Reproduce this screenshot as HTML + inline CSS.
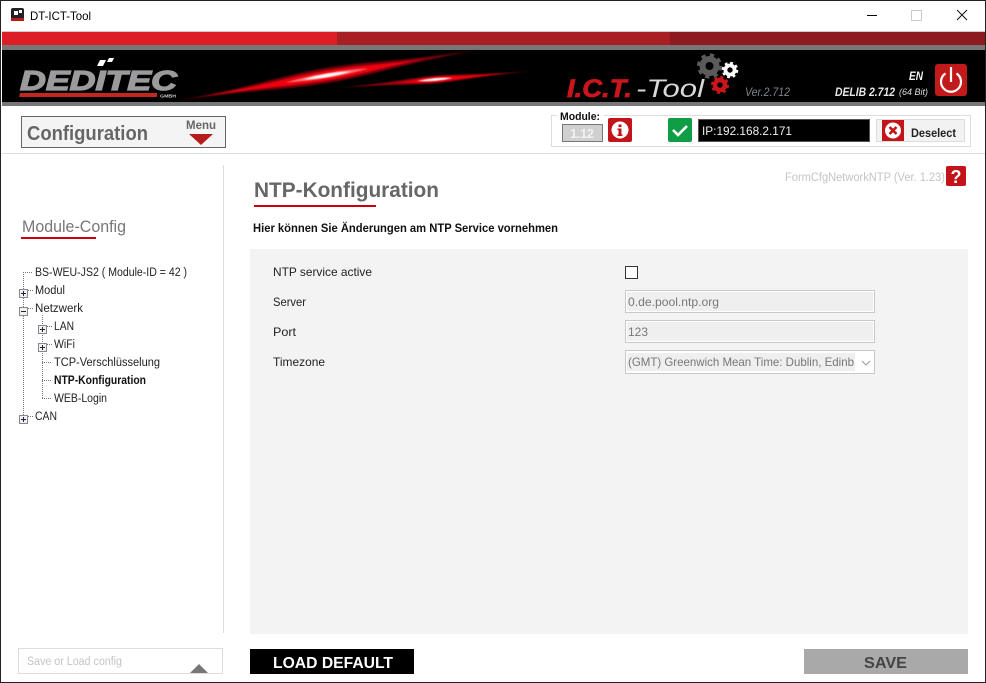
<!DOCTYPE html>
<html><head><meta charset="utf-8"><title>DT-ICT-Tool</title>
<style>
html,body{margin:0;padding:0;background:#fff;width:986px;height:683px;overflow:hidden}
svg{display:block}
text{font-family:"Liberation Sans",sans-serif;white-space:pre}
.t{font-size:11.5px;fill:#222}
.l{font-size:12px;fill:#222}
</style></head><body>
<svg width="986" height="683" viewBox="0 0 986 683" xmlns="http://www.w3.org/2000/svg">
<defs>
<filter id="b1" x="-20%" y="-200%" width="140%" height="500%"><feGaussianBlur stdDeviation=".9"/></filter>
<filter id="b2" x="-20%" y="-200%" width="140%" height="500%"><feGaussianBlur stdDeviation=".6"/></filter>
<clipPath id="sel"><rect x="626" y="351" width="229" height="22"/></clipPath>
</defs>
<rect width="986" height="683" fill="#fff"/>

<!-- title bar -->
<rect x="11" y="8" width="13" height="13" rx="2" fill="#222"/>
<rect x="11" y="18" width="13" height="3" fill="#b81c1c"/>
<rect x="14" y="11" width="4" height="4" fill="#fff"/><rect x="19" y="10" width="3" height="3" fill="#fff"/>
<text x="30" y="20" font-size="12" fill="#000" textLength="61" lengthAdjust="spacingAndGlyphs">DT-ICT-Tool</text>
<rect x="867" y="15" width="10" height="1" fill="#000"/>
<rect x="911.5" y="10.5" width="10" height="10" fill="none" stroke="#ccc"/>
<path d="M957 10L967 20M967 10L957 20" stroke="#111" stroke-width="1" fill="none"/>

<!-- header -->
<rect x="2" y="31" width="983" height="1" fill="#ccc"/>
<rect x="2" y="32" width="335" height="13" fill="#dc1f27"/>
<rect x="337" y="32" width="333" height="13" fill="#a81e22"/>
<rect x="670" y="32" width="315" height="13" fill="#8c1a1e"/>
<rect x="2" y="45" width="983" height="5" fill="#777"/>
<rect x="2" y="50" width="983" height="52" fill="#000"/>
<rect x="2" y="102" width="983" height="4" fill="#777"/>

<!-- logo -->
<text x="20" y="90" font-size="28" font-weight="bold" font-style="italic" fill="#9b9b9d" stroke="#9b9b9d" stroke-width="1.3" textLength="157" lengthAdjust="spacingAndGlyphs">DEDITEC</text>
<path d="M100 60H106L103 66H97ZM109 58H114L112 62H107Z" fill="#fff"/>
<path d="M20 93H157V97H19Z" fill="#c3281e"/>
<text x="160" y="97.5" font-size="4.5" font-weight="bold" fill="#ccc" textLength="16" lengthAdjust="spacingAndGlyphs">GMBH</text>

<!-- swooshes -->
<g transform="translate(327,75.5) rotate(-9.6)">
<path d="M-155 0C-70 -1,-50 -7.5,0 -7.5C50 -7.5,70 -1,155 0C70 1,50 7.5,0 7.5C-50 7.5,-70 1,-155 0Z" fill="#7a0508" filter="url(#b1)"/>
<path d="M-125 0C-60 -.8,-40 -4.6,0 -5C40 -4.6,60 -.8,100 0C60 .8,40 4.6,0 5C-40 4.6,-60 .8,-125 0Z" fill="#ee060c" filter="url(#b2)"/>
<path d="M-42 0Q0 -5 42 0Q0 5 -42 0Z" fill="#ff7070" filter="url(#b2)"/>
<path d="M-25 0Q0 -3.2 25 0Q0 3.2 -25 0Z" fill="#fff" filter="url(#b2)"/>
</g>
<g transform="translate(435,79.5) rotate(-5)">
<path d="M-98 0C-40 -.8,-25 -3.8,0 -3.8C25 -3.8,40 -.8,98 0C40 .8,25 3.8,0 3.8C-25 3.8,-40 .8,-98 0Z" fill="#85050a" filter="url(#b2)"/>
<path d="M-50 0C-20 -.5,-15 -2.8,0 -2.8C15 -2.8,30 -.5,70 0C30 .5,15 2.8,0 2.8C-15 2.8,-20 .5,-50 0Z" fill="#ee060c" filter="url(#b2)"/>
<path d="M-18 0Q0 -2.8 18 0Q0 2.8 -18 0Z" fill="#fff" filter="url(#b2)"/>
</g>

<!-- ICT tool -->
<text x="567" y="97" font-size="25" font-weight="bold" font-style="italic" fill="#c8161c" stroke="#c8161c" stroke-width=".8" textLength="65" lengthAdjust="spacingAndGlyphs">I.C.T.</text>
<text x="636" y="97" font-size="25" font-style="italic" fill="#d8d8d8" textLength="68" lengthAdjust="spacingAndGlyphs">-Tool</text>
<g fill="none">
<circle cx="709.5" cy="66" r="7" stroke="#5a5a5a" stroke-width="6"/>
<circle cx="709.5" cy="66" r="10.8" stroke="#5a5a5a" stroke-width="3.6" stroke-dasharray="4.2 4.28"/>
<circle cx="730" cy="70" r="4.6" stroke="#fff" stroke-width="3.8"/>
<circle cx="730" cy="70" r="7" stroke="#fff" stroke-width="2.6" stroke-dasharray="2.75 2.75"/>
<circle cx="720" cy="85" r="5" stroke="#c8161c" stroke-width="4.4"/>
<circle cx="720" cy="85" r="7.6" stroke="#c8161c" stroke-width="2.8" stroke-dasharray="3 2.97"/>
</g>
<text x="745" y="96" font-size="11.5" font-style="italic" fill="#7d8489" textLength="45" lengthAdjust="spacingAndGlyphs">Ver.2.712</text>
<text x="909" y="80" font-size="11.5" font-weight="bold" font-style="italic" fill="#f2f2f2" textLength="14" lengthAdjust="spacingAndGlyphs">EN</text>
<text x="835" y="96" font-size="12" font-weight="bold" font-style="italic" fill="#e8e8e8" textLength="60" lengthAdjust="spacingAndGlyphs">DELIB 2.712</text>
<text x="899" y="95" font-size="9.5" font-style="italic" fill="#ddd" textLength="29" lengthAdjust="spacingAndGlyphs">(64 Bit)</text>
<rect x="935" y="64" width="32" height="32" rx="3" fill="#c21a1a"/>
<path d="M945.5 73.4A10 10 0 1 0 956.5 73.4" fill="none" stroke="#fff" stroke-width="2.2"/>
<path d="M951 67V82" stroke="#fff" stroke-width="2.2"/>

<!-- toolbar -->
<rect x="21.5" y="116.5" width="204" height="31" fill="#f4f4f4" stroke="#666"/>
<text x="27" y="140" font-size="20" font-weight="bold" fill="#666" textLength="121" lengthAdjust="spacingAndGlyphs">Configuration</text>
<text x="186" y="129" font-size="11.5" font-weight="bold" fill="#666" textLength="30" lengthAdjust="spacingAndGlyphs">Menu</text>
<path d="M189 134H213L201 145Z" fill="#b71c1c"/>

<rect x="551.5" y="115.5" width="419" height="31" fill="#fff" stroke="#ddd"/>
<rect x="557" y="112" width="47" height="8" fill="#fff"/>
<text x="560" y="120" font-size="11" font-weight="bold" fill="#111" textLength="40" lengthAdjust="spacingAndGlyphs">Module:</text>
<rect x="562.5" y="124.5" width="40" height="17" fill="#d0d0d0" stroke="#777"/>
<text x="570" y="138" font-size="13" font-weight="bold" fill="#f2f2f2" textLength="24">1.12</text>
<rect x="608" y="118" width="24" height="24" rx="2" fill="#c3141a"/>
<circle cx="620" cy="130" r="8.5" fill="#fff"/>
<rect x="618.5" y="124.5" width="3" height="2.6" fill="#c3141a"/>
<path d="M617.5 128.5H621.5V134.5H622.5V136H617.5V134.5H618.5V130H617.5Z" fill="#c3141a"/>
<rect x="668" y="118" width="24" height="24" rx="2" fill="#0f9d45"/>
<path d="M673 130L678 135L687 126" fill="none" stroke="#fff" stroke-width="2.6"/>
<rect x="698.5" y="119.5" width="171" height="22" fill="#000" stroke="#555"/>
<text x="702" y="135" font-size="12" fill="#eee" textLength="90" lengthAdjust="spacingAndGlyphs">IP:192.168.2.171</text>
<rect x="876.5" y="119.5" width="88" height="22" fill="#f2f2f2" stroke="#ddd"/>
<rect x="882" y="120" width="22" height="21" fill="#c3141a"/>
<circle cx="893" cy="130.5" r="8" fill="#fff"/>
<path d="M889.5 127L896.5 134M896.5 127L889.5 134" stroke="#c3141a" stroke-width="2.6"/>
<text x="911" y="137" font-size="12" font-weight="bold" fill="#222" textLength="45" lengthAdjust="spacingAndGlyphs">Deselect</text>
<rect x="2" y="153" width="983" height="1" fill="#ddd"/>

<!-- sidebar -->
<rect x="223" y="165" width="1" height="468" fill="#ddd"/>
<text x="22" y="232" font-size="17" fill="#777" textLength="104" lengthAdjust="spacingAndGlyphs">Module-Config</text>
<rect x="21" y="237" width="75" height="2" fill="#c8000a"/>

<g stroke="#777" stroke-dasharray="1 1" fill="none">
<path d="M23.5 272V415M23 272.5H33M28 290.5H33M28 308.5H33M28 416.5H33"/>
<path d="M42.5 315V398M47 326.5H52M47 344.5H52M42 362.5H52M42 380.5H52M42 398.5H52"/>
</g>
<g fill="#f0f0f0" stroke="#888">
<rect x="19.5" y="289.5" width="8" height="8"/><rect x="19.5" y="307.5" width="8" height="8"/><rect x="19.5" y="415.5" width="8" height="8"/>
<rect x="38.5" y="325.5" width="8" height="8"/><rect x="38.5" y="343.5" width="8" height="8"/>
</g>
<g stroke="#224" fill="none">
<path d="M21 293.5H26M23.5 291V296M21 311.5H26M21 419.5H26M23.5 417V422M40 329.5H45M42.5 327V332M40 347.5H45M42.5 345V350"/>
</g>
<text class="t" x="35" y="276" textLength="152" lengthAdjust="spacingAndGlyphs">BS-WEU-JS2 ( Module-ID = 42 )</text>
<text class="t" x="35" y="294" textLength="30" lengthAdjust="spacingAndGlyphs">Modul</text>
<text class="t" x="35" y="312" textLength="48" lengthAdjust="spacingAndGlyphs">Netzwerk</text>
<text class="t" x="54" y="330" textLength="20" lengthAdjust="spacingAndGlyphs">LAN</text>
<text class="t" x="54" y="348" textLength="21" lengthAdjust="spacingAndGlyphs">WiFi</text>
<text class="t" x="54" y="366" textLength="106" lengthAdjust="spacingAndGlyphs">TCP-Verschlüsselung</text>
<text class="t" x="54" y="384" font-weight="bold" style="fill:#111" textLength="92" lengthAdjust="spacingAndGlyphs">NTP-Konfiguration</text>
<text class="t" x="54" y="402" textLength="53" lengthAdjust="spacingAndGlyphs">WEB-Login</text>
<text class="t" x="35" y="420" textLength="22" lengthAdjust="spacingAndGlyphs">CAN</text>

<rect x="18.5" y="648.5" width="204" height="25" fill="#fff" stroke="#ddd"/>
<text x="27" y="665" font-size="11.5" fill="#c4c4c4" textLength="95" lengthAdjust="spacingAndGlyphs">Save or Load config</text>
<path d="M190 673L199 664L208 673Z" fill="#777"/>

<!-- main -->
<text x="254" y="197" font-size="21" font-weight="bold" fill="#666" textLength="185" lengthAdjust="spacingAndGlyphs">NTP-Konfiguration</text>
<rect x="254" y="205" width="122" height="2" fill="#c8000a"/>
<text x="253" y="232" font-size="12" font-weight="bold" fill="#111" textLength="305" lengthAdjust="spacingAndGlyphs">Hier können Sie Änderungen am NTP Service vornehmen</text>
<text x="785" y="181" font-size="11.5" fill="#c4c4c4" textLength="160" lengthAdjust="spacingAndGlyphs">FormCfgNetworkNTP (Ver. 1.23)</text>
<rect x="946" y="166" width="20" height="20" rx="2" fill="#c3141a"/>
<text x="950.5" y="183" font-size="18" font-weight="bold" fill="#fff">?</text>

<rect x="250" y="249" width="718" height="385" fill="#f3f3f3"/>
<text class="l" x="273" y="276" textLength="99" lengthAdjust="spacingAndGlyphs">NTP service active</text>
<text class="l" x="273" y="306" textLength="33" lengthAdjust="spacingAndGlyphs">Server</text>
<text class="l" x="273" y="336" textLength="23" lengthAdjust="spacingAndGlyphs">Port</text>
<text class="l" x="273" y="366" textLength="52" lengthAdjust="spacingAndGlyphs">Timezone</text>

<rect x="625.5" y="266.5" width="12" height="12" fill="#fff" stroke="#333"/>
<rect x="625.5" y="290.5" width="249" height="22" fill="#efefef" stroke="#c8c8c8"/>
<rect x="626.5" y="291.5" width="247" height="20" fill="#efefef" stroke="#fff"/>
<text x="628" y="306" font-size="12" fill="#777" textLength="91" lengthAdjust="spacingAndGlyphs">0.de.pool.ntp.org</text>
<rect x="625.5" y="320.5" width="249" height="22" fill="#efefef" stroke="#c8c8c8"/>
<rect x="626.5" y="321.5" width="247" height="20" fill="#efefef" stroke="#fff"/>
<text x="628" y="336" font-size="12" fill="#777" textLength="20" lengthAdjust="spacingAndGlyphs">123</text>
<rect x="625.5" y="350.5" width="249" height="23" fill="#fff" stroke="#c8c8c8"/>
<rect x="627" y="353" width="228" height="18" fill="#efefef"/>
<g clip-path="url(#sel)"><text x="628" y="366" font-size="12" fill="#777" textLength="226" lengthAdjust="spacingAndGlyphs">(GMT) Greenwich Mean Time: Dublin, Edinb</text></g>
<path d="M862 361L866 365L870 361" fill="none" stroke="#999"/>

<rect x="250" y="649" width="164" height="25" fill="#000"/>
<text x="273" y="668" font-size="16" font-weight="bold" fill="#fff" textLength="120" lengthAdjust="spacingAndGlyphs">LOAD DEFAULT</text>
<rect x="804" y="649" width="164" height="25" fill="#a9a9a9"/>
<text x="864" y="668" font-size="16" font-weight="bold" fill="#444" textLength="43" lengthAdjust="spacingAndGlyphs">SAVE</text>

<!-- window border -->
<rect x="0" y="0" width="986" height="1" fill="#222"/>
<rect x="0" y="0" width="1" height="683" fill="#222"/>
<rect x="985" y="0" width="1" height="683" fill="#222"/>
<rect x="0" y="682" width="986" height="1" fill="#222"/>
</svg>
</body></html>
